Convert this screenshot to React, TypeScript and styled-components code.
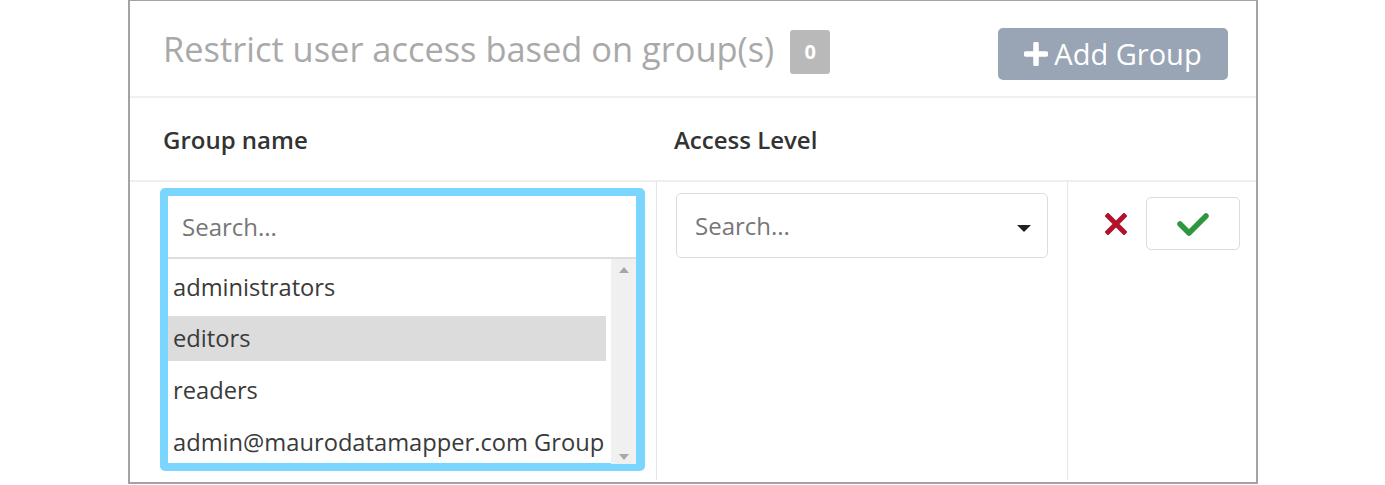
import React from "react";
import styled, { createGlobalStyle } from "styled-components";

const Global = createGlobalStyle`
  html, body { margin: 0; padding: 0; background: #fff; }
  body { font-family: "Open Sans", "Noto Sans", sans-serif; }
  * { box-sizing: border-box; }
`;

const Page = styled.div`
  width: 1385px;
  height: 485px;
  padding: 0 127px 0 128px;
`;

const Panel = styled.div`
  border: 2px solid #a3a3a3;
  border-top-width: 1px;
  height: 484px;
  display: flex;
  flex-direction: column;
`;

const TitleBar = styled.div`
  height: 97px;
  display: flex;
  align-items: center;
  padding: 6px 28px 0 33px;
  border-bottom: 2px solid #f0f0f0;
`;

const Title = styled.h2`
  margin: 0;
  font-size: 34.4px;
  font-weight: 400;
  color: #a9a9a9;
  margin-top: -6px;
`;

const Badge = styled.span`
  margin-left: 16px;
  width: 40px;
  height: 44px;
  border-radius: 3px;
  background: #b9b9b9;
  color: #fff;
  font-weight: 700;
  font-size: 20px;
  display: flex;
  align-items: center;
  justify-content: center;
`;

const AddButton = styled.button`
  margin-left: auto;
  width: 230px;
  height: 52px;
  margin-top: 4px;
  border: none;
  border-radius: 5px;
  background: #99a5b5;
  color: #fff;
  font-family: inherit;
  font-size: 29px;
  font-weight: 500;
  display: flex;
  align-items: center;
  justify-content: center;
  gap: 6px;
  padding: 0;
`;

const Grid = styled.div`
  display: grid;
  grid-template-columns: 526px 411px 1fr;
`;

const HeadCell = styled.div<{ $pl: number }>`
  height: 84px;
  display: flex;
  align-items: center;
  padding-left: ${(p) => p.$pl}px;
  font-size: 24px;
  font-weight: 600;
  color: #333;
  border-bottom: 2px solid #eeeeee;
`;

const BodyCell = styled.div<{ $divider?: boolean }>`
  height: 298px;
  border-left: ${(p) => (p.$divider ? "1px solid #e6e6e6" : "none")};
`;

const GroupCell = styled(BodyCell)`
  padding: 6px 0 0 30px;
`;

const Dropdown = styled.div`
  width: 485px;
  height: 283px;
  border: 8px solid #7ad6ff;
  border-right-width: 9px;
  border-radius: 5px;
  display: flex;
  flex-direction: column;
  background: #fff;
`;

const SearchInput = styled.div`
  height: 63px;
  display: flex;
  align-items: center;
  padding-left: 14px;
  font-size: 24px;
  color: #777;
  border-bottom: 2px solid #dedede;
  flex-shrink: 0;
`;

const ListArea = styled.div`
  flex: 1;
  display: flex;
`;

const List = styled.div`
  flex: 1;
  padding-top: 5px;
  display: flex;
  flex-direction: column;
  gap: 6.7px;
`;

const Option = styled.div<{ $active?: boolean }>`
  height: 45px;
  display: flex;
  align-items: center;
  padding-left: 5px;
  font-size: 23.7px;
  color: #3a3a3a;
  background: ${(p) => (p.$active ? "#dcdcdc" : "transparent")};
  margin-right: 5px;
  white-space: nowrap;
`;

const Scrollbar = styled.div`
  width: 25px;
  background: #f0f0f0;
  display: flex;
  flex-direction: column;
  justify-content: space-between;
  align-items: center;
  padding: 8px 0 4px;
`;

const AccessCell = styled(BodyCell)`
  padding: 11px 19px 0 19px;
`;

const Select = styled.div`
  height: 65px;
  border: 1px solid #dddddd;
  border-radius: 5px;
  display: flex;
  align-items: center;
  padding: 0 16px 0 18px;
  font-size: 24px;
  color: #777;
`;

const Caret = styled.span`
  margin-left: auto;
  width: 0;
  height: 0;
  border-left: 7px solid transparent;
  border-right: 7px solid transparent;
  border-top: 7px solid #222;
  margin-top: 6px;
`;

const ActionCell = styled(BodyCell)`
  padding: 15px 0 0 37px;
  display: flex;
  align-items: flex-start;
  gap: 19px;
`;

const CancelIcon = styled.span`
  margin-top: 16px;
  display: flex;
`;

const ConfirmButton = styled.button`
  width: 94px;
  height: 53px;
  border: 1px solid #dcdcdc;
  border-radius: 5px;
  background: #fff;
  display: flex;
  align-items: center;
  justify-content: center;
  padding: 0;
`;

export default function App() {
  const options = [
    "administrators",
    "editors",
    "readers",
    "admin@maurodatamapper.com Group",
  ];
  return (
    <Page>
      <Global />
      <Panel>
        <TitleBar>
          <Title>Restrict user access based on group(s)</Title>
          <Badge>0</Badge>
          <AddButton>
            <svg width="24" height="24" viewBox="0 0 24 24">
              <path d="M12 2v20M2 12h20" stroke="#fff" strokeWidth="5.5" strokeLinecap="round" />
            </svg>
            Add Group
          </AddButton>
        </TitleBar>
        <Grid>
          <HeadCell $pl={33}>Group name</HeadCell>
          <HeadCell $pl={18}>Access Level</HeadCell>
          <HeadCell $pl={0} />
          <GroupCell>
            <Dropdown>
              <SearchInput>Search...</SearchInput>
              <ListArea>
                <List>
                  {options.map((o, i) => (
                    <Option key={o} $active={i === 1}>
                      {o}
                    </Option>
                  ))}
                </List>
                <Scrollbar>
                  <svg width="10" height="6" viewBox="0 0 10 6">
                    <path d="M5 0L10 6H0z" fill="#a8a8a8" />
                  </svg>
                  <svg width="10" height="6" viewBox="0 0 10 6">
                    <path d="M0 0H10L5 6z" fill="#a8a8a8" />
                  </svg>
                </Scrollbar>
              </ListArea>
            </Dropdown>
          </GroupCell>
          <AccessCell $divider>
            <Select>
              Search...
              <Caret />
            </Select>
          </AccessCell>
          <ActionCell $divider>
            <CancelIcon>
              <svg width="22" height="22" viewBox="0 0 22 22">
                <path d="M3 3L19 19M19 3L3 19" stroke="#b0132b" strokeWidth="5" strokeLinecap="square" />
              </svg>
            </CancelIcon>
            <ConfirmButton>
              <svg width="32" height="24" viewBox="0 0 32 24">
                <path d="M3 12L12 21L29 4" stroke="#2f9640" strokeWidth="5.5" fill="none" strokeLinecap="round" strokeLinejoin="round" />
              </svg>
            </ConfirmButton>
          </ActionCell>
        </Grid>
      </Panel>
    </Page>
  );
}
